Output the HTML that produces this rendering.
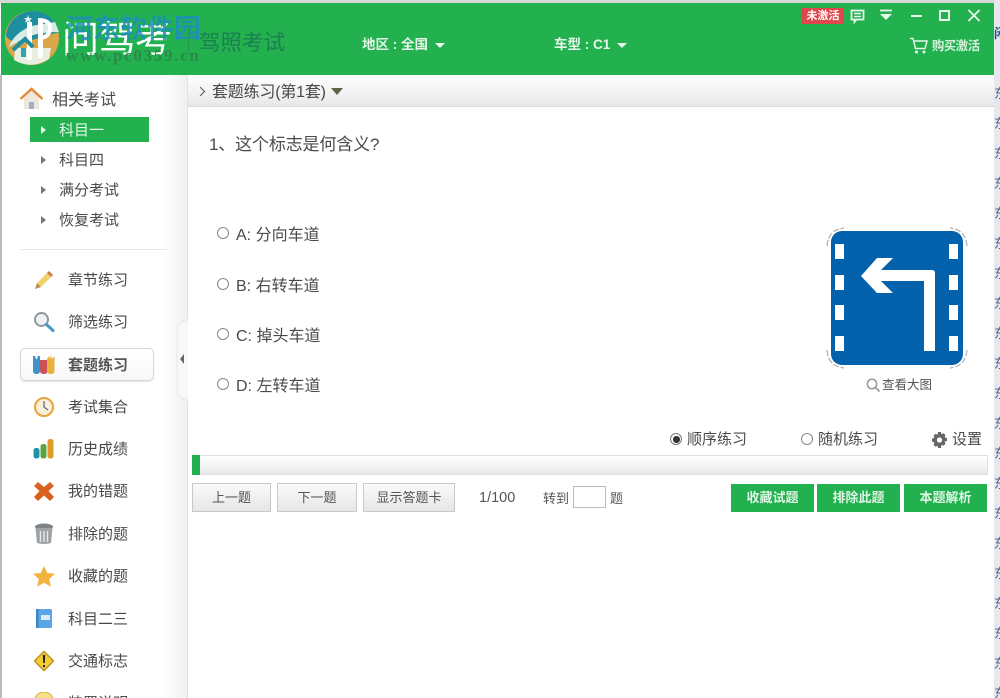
<!DOCTYPE html>
<html><head><meta charset="utf-8">
<style>
html,body{margin:0;padding:0;background:#fff;}
#p{position:relative;width:1000px;height:698px;overflow:hidden;background:#fff;font-family:"Liberation Sans","Noto Sans CJK SC",sans-serif;color:#444;filter:blur(.35px);}
.a{position:absolute;white-space:nowrap;}
.t{font-size:15px;line-height:20px;color:#4a4a4a;}
.m{font-size:15px;line-height:20px;color:#484848;left:68px;}
.s{font-size:15px;line-height:20px;color:#4a4a4a;left:59px;}
.tri{position:absolute;width:0;height:0;border-left:5px solid #777;border-top:4.5px solid transparent;border-bottom:4.5px solid transparent;left:41px;}
.opt{font-size:16px;line-height:22px;color:#4a4a4a;left:236px;}
.rad{position:absolute;width:10px;height:10px;border:1.3px solid #888;border-radius:50%;background:#fff;}
.btn{position:absolute;top:483px;height:29px;box-sizing:border-box;border:1px solid #c8c8c8;background:linear-gradient(#fafafa,#e6e6e6);font-size:13px;line-height:27px;text-align:center;color:#555;}
.gb{position:absolute;top:484px;height:28px;width:83px;background:#23b14f;color:#dff5e5;font-size:13px;font-weight:bold;line-height:28px;text-align:center;}
.r{position:absolute;left:994px;font-size:13px;line-height:16px;color:#48628a;}
</style></head><body>
<div id="p">
<!-- right background strip -->
<div class="a" style="left:994px;top:0;width:6px;height:698px;background:#e6e8ee;"></div>
<div class="r" style="top:26px;color:#1b4f8a;font-weight:bold;">闲</div>
<div class="r" style="top:86px;">东</div><div class="r" style="top:116px;">东</div><div class="r" style="top:146px;">东</div><div class="r" style="top:176px;">东</div><div class="r" style="top:206px;">东</div><div class="r" style="top:236px;">东</div><div class="r" style="top:266px;">东</div><div class="r" style="top:296px;">东</div><div class="r" style="top:326px;">东</div><div class="r" style="top:356px;">东</div><div class="r" style="top:386px;">东</div><div class="r" style="top:416px;">东</div><div class="r" style="top:446px;">东</div><div class="r" style="top:476px;">东</div><div class="r" style="top:506px;">东</div><div class="r" style="top:536px;">东</div><div class="r" style="top:566px;">东</div><div class="r" style="top:596px;">东</div><div class="r" style="top:626px;">东</div><div class="r" style="top:656px;">东</div><div class="r" style="top:686px;">东</div>

<!-- window -->
<div class="a" style="left:0;top:0;width:994px;height:3px;background:#d8d8d8;"></div>
<div class="a" style="left:1px;top:3px;width:993px;height:72px;background:#23b14f;"></div>
<div class="a" style="left:0;top:75px;width:2px;height:623px;background:#bbb;"></div>

<!-- logo -->
<svg class="a" style="left:5px;top:10px;" width="56" height="58" viewBox="0 0 56 58">
<circle cx="27" cy="28" r="27" fill="#d9a64a"/>
<path d="M27 1A27 27 0 0 0 1 26Q8 36 27 30L54 22A27 27 0 0 0 27 1Z" fill="#1c8ea0"/>
<path d="M4 37Q8 24 26 16L50 12L54 22Q30 22 16 30Z" fill="#d8ebe4"/>
<path d="M9 50Q26 60 44 49L46 38L10 38Z" fill="#e8eee0"/>
<path d="M22 12h5v38h-5zM33 10h5v38h-5z" fill="#fff"/>
<path d="M33 10q13 0 12 9t-12 9" fill="none" stroke="#fff" stroke-width="4"/>
<path d="M8 40l12-11 8 8" fill="none" stroke="#1c8ea0" stroke-width="4"/>
<path d="M16 38h5v9h-5z" fill="#2aa6b4"/>
<path d="M23 5l1 3 3 0-2 2 1 3-3-2-3 2 1-3-2-2 3 0z" fill="#e6f2f0"/>
</svg>
<div class="a" style="left:62px;top:18px;font-size:37px;line-height:44px;color:#fff;letter-spacing:-.5px;">问驾考</div>
<!-- watermark -->
<div class="a" style="left:66px;top:13px;font-size:27px;line-height:32px;font-weight:bold;color:#1e8fb8;opacity:.85;letter-spacing:0;">河东软件园</div>
<div class="a" style="left:66px;top:46px;font-size:17px;line-height:20px;font-family:'Liberation Serif',serif;font-weight:bold;color:#2a8a4c;letter-spacing:1.700px;">www.pc0359.cn</div>
<div class="a" style="left:188px;top:28px;width:1px;height:26px;background:#1f9a48;"></div>
<div class="a" style="left:199px;top:29px;font-size:21.500px;line-height:28px;color:#1c7f50;">驾照考试</div>

<div class="a" style="left:362px;top:36px;font-size:13.500px;font-weight:bold;line-height:18px;color:#e6f7ea;">地区 : 全国</div>
<div class="a" style="left:435px;top:43px;width:0;height:0;border-top:5px solid #e6f7ea;border-left:5px solid transparent;border-right:5px solid transparent;"></div>
<div class="a" style="left:554px;top:36px;font-size:13.500px;font-weight:bold;line-height:18px;color:#e6f7ea;">车型 : C1</div>
<div class="a" style="left:617px;top:43px;width:0;height:0;border-top:5px solid #e6f7ea;border-left:5px solid transparent;border-right:5px solid transparent;"></div>

<!-- top right -->
<div class="a" style="left:802px;top:8px;width:42px;height:16px;background:#e0474c;color:#fff;font-size:11px;line-height:16px;text-align:center;font-weight:bold;">未激活</div>
<svg class="a" style="left:850px;top:9px;" width="16" height="15" viewBox="0 0 16 15"><path d="M1.500 1.500h12v9h-7l-2 2.500v-2.500h-3z" fill="none" stroke="#e6f7ea" stroke-width="1.800"/><path d="M4 4.500h7M4 7.500h7" stroke="#e6f7ea" stroke-width="1.500"/></svg>
<svg class="a" style="left:879px;top:9px;" width="14" height="14" viewBox="0 0 14 14"><path d="M1 1.500h12" stroke="#e6f7ea" stroke-width="1.800"/><path d="M1 5h12l-6 6z" fill="#e6f7ea"/></svg>
<div class="a" style="left:911px;top:15px;width:11px;height:2px;background:#e6f7ea;"></div>
<div class="a" style="left:939px;top:10px;width:11px;height:11px;box-sizing:border-box;border:2px solid #e6f7ea;"></div>
<svg class="a" style="left:967px;top:9px;" width="14" height="13" viewBox="0 0 14 13"><path d="M1.500 1l11 11M12.500 1l-11 11" stroke="#e6f7ea" stroke-width="1.900"/></svg>
<svg class="a" style="left:909px;top:37px;" width="19" height="18" viewBox="0 0 19 18"><path d="M1 1.500h3l2.500 10h9.500l2-7.500H5" fill="none" stroke="#e6f7ea" stroke-width="1.500"/><circle cx="7.500" cy="15" r="1.500" fill="#e6f7ea"/><circle cx="15" cy="15" r="1.500" fill="#e6f7ea"/></svg>
<div class="a" style="left:932px;top:38px;font-size:12.300px;line-height:16px;font-weight:bold;color:#d8f2df;letter-spacing:-.4px;">购买激活</div>

<!-- sidebar background -->
<div class="a" style="left:163px;top:75px;width:24px;height:623px;background:linear-gradient(90deg,#fff,#f1f1f1);"></div>
<div class="a" style="left:187px;top:75px;width:1px;height:623px;background:#e2e2e2;"></div>
<!-- collapse handle -->
<svg class="a" style="left:176px;top:318px;" width="12" height="84" viewBox="0 0 12 84"><path d="M12 1L1 7V77L12 83" fill="#f8f8f8" stroke="#e8e8e8"/><path d="M8 36v10l-4-5z" fill="#666"/></svg>

<!-- house -->
<svg class="a" style="left:19px;top:87px;" width="25" height="23" viewBox="0 0 25 23"><path d="M5 11v11h15V11L12.500 4z" fill="#eee8dc"/><path d="M1.500 12L12.500 2 23.500 12" fill="none" stroke="#e58a3a" stroke-width="2.500"/><path d="M10 22v-7h5v7z" fill="#9fb0c4"/></svg>
<div class="a" style="left:52px;top:90px;font-size:16px;line-height:22px;color:#4a4a4a;">相关考试</div>
<div class="a" style="left:30px;top:117px;width:119px;height:25px;background:#23b14f;"></div>
<div class="tri" style="border-left-color:#e6f7ea;top:126px;"></div>
<div class="a s" style="top:121px;color:#e4f7e9;">科目一</div>
<div class="tri" style="top:156px;"></div><div class="a s" style="top:151px;">科目四</div>
<div class="tri" style="top:186px;"></div><div class="a s" style="top:181px;">满分考试</div>
<div class="tri" style="top:216px;"></div><div class="a s" style="top:211px;">恢复考试</div>
<div class="a" style="left:21px;top:249px;width:146px;height:1px;background:#e6e6e6;"></div>

<!-- pencil -->
<svg class="a" style="left:33px;top:269px;" width="22" height="22" viewBox="0 0 22 22"><path d="M2 20l2-6L16 2l4 4L8 18z" fill="#f3d06e"/><path d="M16 2l4 4-2 2-4-4z" fill="#c9803c"/><path d="M2 20l2-6 4 4z" fill="#b89058"/></svg>
<div class="a m" style="top:271px;">章节练习</div>
<!-- search -->
<svg class="a" style="left:33px;top:311px;" width="22" height="22" viewBox="0 0 22 22"><circle cx="8.500" cy="8.500" r="6.500" fill="#eef2f4" stroke="#8f979c" stroke-width="2"/><path d="M13.500 13.500l6.500 6" stroke="#4c9bc4" stroke-width="3.200" stroke-linecap="round"/></svg>
<div class="a m" style="top:313px;">筛选练习</div>
<!-- selected -->
<div class="a" style="left:20px;top:348px;width:134px;height:33px;box-sizing:border-box;border:1px solid #d6d6d6;border-radius:5px;background:linear-gradient(#fff,#f8f8f8);box-shadow:0 1px 1px #e5e5e5;"></div>
<svg class="a" style="left:33px;top:355px;" width="22" height="20" viewBox="0 0 22 20"><path d="M0 1h2l1 3h1l1-3h2v15q0 3-3.500 3T0 16z" fill="#3d93c9"/><path d="M7 5h7.500v11q0 3-3.700 3T7 16z" fill="#c9535a"/><path d="M14 4l2-3 1 3 1-4 1 4 2.500-3v15q0 3-3.700 3T14 16z" fill="#e8b23c"/></svg>
<div class="a m" style="top:356px;font-weight:bold;color:#555;">套题练习</div>
<!-- clock -->
<svg class="a" style="left:33px;top:396px;" width="22" height="22" viewBox="0 0 22 22"><circle cx="11" cy="11" r="9" fill="#f8f0dc" stroke="#e8a33c" stroke-width="2"/><path d="M11 5v6l4 3" fill="none" stroke="#67707a" stroke-width="1.300"/></svg>
<div class="a m" style="top:398px;">考试集合</div>
<!-- bars -->
<svg class="a" style="left:33px;top:439px;" width="22" height="21" viewBox="0 0 22 21"><rect x="0.500" y="9" width="6" height="10.500" rx="2.500" fill="#1c93a8"/><rect x="7.500" y="5" width="6" height="14.500" rx="2.500" fill="#5ba63c"/><rect x="14.500" y="0" width="6" height="19.500" rx="2.500" fill="#e09a2c"/></svg>
<div class="a m" style="top:440px;">历史成绩</div>
<!-- X -->
<svg class="a" style="left:33px;top:481px;" width="22" height="21" viewBox="0 0 22 21"><path d="M5 1l6 5 6-5 4 4-5.500 5 5.500 6-4 4-6-5.500-6 5.500-4-4 5.500-6-5.500-5z" fill="#d9601f"/></svg>
<div class="a m" style="top:482px;">我的错题</div>
<!-- trash -->
<svg class="a" style="left:34px;top:523px;" width="20" height="22" viewBox="0 0 20 22"><ellipse cx="10" cy="4" rx="9" ry="3.500" fill="#7e8388"/><path d="M1.500 5l1.500 15q7 2 14 0L18.500 5z" fill="#9ea2a6"/><path d="M6.500 8v11M10 8v11M13.500 8v11" stroke="#e8e8e8" stroke-width="1.400"/></svg>
<div class="a m" style="top:525px;">排除的题</div>
<!-- star -->
<svg class="a" style="left:33px;top:566px;" width="22" height="21" viewBox="0 0 22 21"><path d="M11 0l3.200 7 7.800.8-5.800 5.200 1.700 7.600L11 16.700 4.100 20.600l1.700-7.600L0 7.800 7.800 7z" fill="#f2b23e"/></svg>
<div class="a m" style="top:567px;">收藏的题</div>
<!-- book -->
<svg class="a" style="left:35px;top:608px;" width="18" height="21" viewBox="0 0 18 21"><rect x="1" y="1" width="16" height="19" rx="1.500" fill="#5aa5e5"/><rect x="1" y="1" width="2.500" height="19" fill="#3f86c4"/><rect x="6" y="7" width="9" height="5" fill="#dcecf8"/></svg>
<div class="a m" style="top:610px;">科目二三</div>
<!-- warning -->
<svg class="a" style="left:33px;top:650px;" width="22" height="22" viewBox="0 0 22 22"><path d="M11 1.500l9.500 9.500-9.500 9.500L1.500 11z" fill="#f5ce32" stroke="#c69a30" stroke-width="1.600" stroke-linejoin="round"/><path d="M9.800 5h2.400l-.4 8h-1.600zM10 15h2v2h-2z" fill="#222"/></svg>
<div class="a m" style="top:652px;">交通标志</div>
<!-- bottom cut -->
<svg class="a" style="left:33px;top:692px;" width="22" height="6" viewBox="0 0 22 6"><path d="M2 8a9 8 0 0 1 18 0z" fill="#f5e08a" stroke="#d9ae3c"/></svg>
<div class="a m" style="top:694px;">装置说明</div>

<!-- breadcrumb -->
<div class="a" style="left:188px;top:75px;width:806px;height:32px;box-sizing:border-box;background:linear-gradient(#fff,#e8e8e8);border-bottom:1px solid #dcdcdc;"></div>
<svg class="a" style="left:199px;top:86px;" width="7" height="11" viewBox="0 0 7 11"><path d="M1 1l4.500 4.500L1 10" fill="none" stroke="#666" stroke-width="1.200"/></svg>
<div class="a" style="left:212px;top:83px;font-size:16px;line-height:20px;color:#484848;letter-spacing:-.2px;">套题练习(第1套)</div>
<div class="a" style="left:331px;top:88px;width:0;height:0;border-top:7px solid #5f6349;border-left:6px solid transparent;border-right:6px solid transparent;"></div>

<!-- question -->
<div class="a" style="left:209px;top:133px;font-size:17px;line-height:24px;color:#4a4a4a;letter-spacing:-.15px;">1、这个标志是何含义?</div>
<div class="rad" style="left:217px;top:227px;"></div><div class="a opt" style="top:225px;">A: 分向车道</div>
<div class="rad" style="left:217px;top:278px;"></div><div class="a opt" style="top:276px;">B: 右转车道</div>
<div class="rad" style="left:217px;top:328px;"></div><div class="a opt" style="top:326px;">C: 掉头车道</div>
<div class="rad" style="left:217px;top:378px;"></div><div class="a opt" style="top:376px;">D: 左转车道</div>

<!-- sign -->
<svg class="a" style="left:824px;top:226px;" width="146" height="144" viewBox="0 0 146 144">
<path d="M3 20Q4 4 20 2M143 20Q142 4 126 2M3 124Q4 140 20 142M143 124Q142 140 126 142" fill="none" stroke="#9aa0a6" stroke-width="1" stroke-dasharray="6 2"/>
<rect x="7" y="5" width="132" height="134" rx="11" fill="#0461ac"/>
<g fill="#fff">
<rect x="11" y="18" width="9" height="15"/><rect x="11" y="49" width="9" height="15"/><rect x="11" y="79" width="9" height="15"/><rect x="11" y="110" width="9" height="15"/>
<rect x="125" y="18" width="9" height="15"/><rect x="125" y="49" width="9" height="15"/><rect x="125" y="79" width="9" height="15"/><rect x="125" y="110" width="9" height="15"/>
<path d="M37 50L53 32H69L57 44H108Q111 44 111 47V125H100V55H57L69 67H53Z"/>
</g></svg>
<svg class="a" style="left:866px;top:378px;" width="15" height="15" viewBox="0 0 15 15"><circle cx="6" cy="6" r="4.700" fill="none" stroke="#999" stroke-width="1.500"/><path d="M9.500 9.500l4 4" stroke="#999" stroke-width="1.800"/></svg>
<div class="a" style="left:882px;top:377px;font-size:12.500px;line-height:17px;color:#555;">查看大图</div>

<!-- modes -->
<div class="rad" style="left:670px;top:433px;border-color:#777;"></div>
<div class="a" style="left:673px;top:436px;width:6.500px;height:6.500px;border-radius:50%;background:#333;"></div>
<div class="a t" style="left:687px;top:430px;">顺序练习</div>
<div class="rad" style="left:801px;top:433px;"></div>
<div class="a t" style="left:818px;top:430px;">随机练习</div>
<svg class="a" style="left:931px;top:431px;" width="17" height="18" viewBox="0 0 17 18"><path d="M7 1h3l.5 2.200 2-.9 2 2-.9 2.200 2.400.500v3l-2.400.500.9 2.200-2 2-2-.9L10 17H7l-.5-2.200-2 .9-2-2 .9-2.200L1 10.500v-3l2.400-.5-.9-2.200 2-2 2 .9z" fill="#666"/><circle cx="8.500" cy="9" r="2.600" fill="#fff"/></svg>
<div class="a t" style="left:952px;top:430px;">设置</div>

<!-- progress -->
<div class="a" style="left:192px;top:455px;width:796px;height:20px;box-sizing:border-box;border:1px solid #e0e0e0;background:linear-gradient(#fff,#e8e8e8);"></div>
<div class="a" style="left:192px;top:455px;width:8px;height:20px;background:#23b14f;"></div>

<!-- buttons -->
<div class="btn" style="left:192px;width:79px;">上一题</div>
<div class="btn" style="left:277px;width:80px;">下一题</div>
<div class="btn" style="left:363px;width:92px;">显示答题卡</div>
<div class="a" style="left:479px;top:489px;font-size:14.500px;line-height:18px;color:#555;">1/100</div>
<div class="a" style="left:543px;top:490px;font-size:13px;line-height:18px;color:#555;">转到</div>
<div class="a" style="left:573px;top:486px;width:33px;height:22px;box-sizing:border-box;border:1px solid #bbb;background:#fff;"></div>
<div class="a" style="left:610px;top:490px;font-size:13px;line-height:18px;color:#555;">题</div>
<div class="gb" style="left:731px;">收藏试题</div>
<div class="gb" style="left:817px;">排除此题</div>
<div class="gb" style="left:904px;">本题解析</div>
</div>
</body></html>
